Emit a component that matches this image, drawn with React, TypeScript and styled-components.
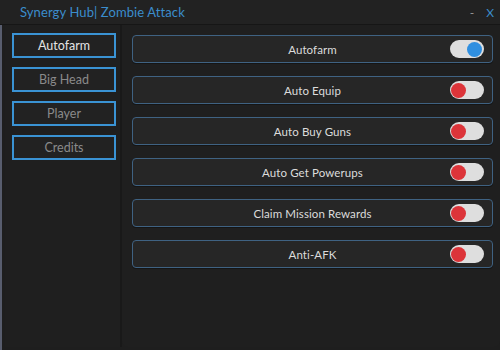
import React from "react";
import styled, { createGlobalStyle } from "styled-components";

const Global = createGlobalStyle`
  html, body { margin: 0; padding: 0; background: #1c1c1c; }
  body { font-family: Lato, "Open Sans", sans-serif; }
`;

const Window = styled.div`
  width: 500px;
  height: 350px;
  background: #1e1e1e;
  display: flex;
  flex-direction: column;
  overflow: hidden;
`;

const TitleBar = styled.div`
  height: 24px;
  flex: none;
  display: flex;
  align-items: center;
  padding: 0 6px 0 20px;
  background: #222222;
  border-bottom: 1px solid #161616;
`;

const Title = styled.div`
  flex: 1;
  color: #3b8dcc;
  font-size: 13px;
  letter-spacing: 0.1px;
`;

const Control = styled.div<{ $blue?: boolean }>`
  color: ${(p) => (p.$blue ? "#3b8dcc" : "#9a9a9a")};
  font-size: 12px;
  margin-left: ${(p) => (p.$blue ? "12px" : "0")};
`;

const Body = styled.div`
  flex: 1;
  display: flex;
  padding: 0 0 3px 3px;
  border-left: 2px solid #585d6e;
`;

const Sidebar = styled.div`
  width: 117px;
  flex: none;
  display: flex;
  flex-direction: column;
  gap: 9px;
  padding: 8px 0 0 7px;
  box-sizing: border-box;
  background: #1f1f1f;
  border-right: 2px solid #191919;
`;

const TabButton = styled.div<{ $active?: boolean }>`
  width: 104px;
  height: 25px;
  box-sizing: border-box;
  border: 2px solid #3a93d4;
  display: flex;
  align-items: center;
  justify-content: center;
  color: ${(p) => (p.$active ? "#e4e4e4" : "#8a8a8a")};
  font-size: 12.5px;
  background: #222;
`;

const Main = styled.div`
  flex: 1;
  display: flex;
  flex-direction: column;
  gap: 13px;
  padding: 10px 7px 0 10px;
  background: #1f1f1f;
  border-radius: 0 0 6px 6px;
`;

const Row = styled.div`
  height: 28px;
  box-sizing: border-box;
  border: 1px solid #3f6282;
  border-radius: 4px;
  background: #262626;
  position: relative;
  display: flex;
  align-items: center;
  justify-content: center;
  box-shadow: 0 1px 0 #151515;
`;

const Label = styled.div`
  color: #dcdcdc;
  font-size: 11.5px;
  letter-spacing: 0.1px;
`;

const Toggle = styled.div<{ $on?: boolean }>`
  position: absolute;
  right: 8px;
  top: 4px;
  width: 34px;
  height: 18px;
  border-radius: 9px;
  background: #dedede;
  display: flex;
  align-items: center;
  justify-content: ${(p) => (p.$on ? "flex-end" : "flex-start")};
  padding: 0 2px 0 1px;
  box-sizing: border-box;
`;

const Knob = styled.div<{ $on?: boolean }>`
  width: 15px;
  height: 15px;
  border-radius: 50%;
  background: ${(p) => (p.$on ? "#2f8fe0" : "#dc3439")};
`;

const tabs = ["Autofarm", "Big Head", "Player", "Credits"];
const items: [string, boolean][] = [
  ["Autofarm", true],
  ["Auto Equip", false],
  ["Auto Buy Guns", false],
  ["Auto Get Powerups", false],
  ["Claim Mission Rewards", false],
  ["Anti-AFK", false],
];

export default function App() {
  return (
    <>
      <Global />
      <Window>
        <TitleBar>
          <Title>Synergy Hub| Zombie Attack</Title>
          <Control>-</Control>
          <Control $blue>X</Control>
        </TitleBar>
        <Body>
          <Sidebar>
            {tabs.map((t, i) => (
              <TabButton key={t} $active={i === 0}>
                {t}
              </TabButton>
            ))}
          </Sidebar>
          <Main>
            {items.map(([name, on]) => (
              <Row key={name}>
                <Label>{name}</Label>
                <Toggle $on={on}>
                  <Knob $on={on} />
                </Toggle>
              </Row>
            ))}
          </Main>
        </Body>
      </Window>
    </>
  );
}
